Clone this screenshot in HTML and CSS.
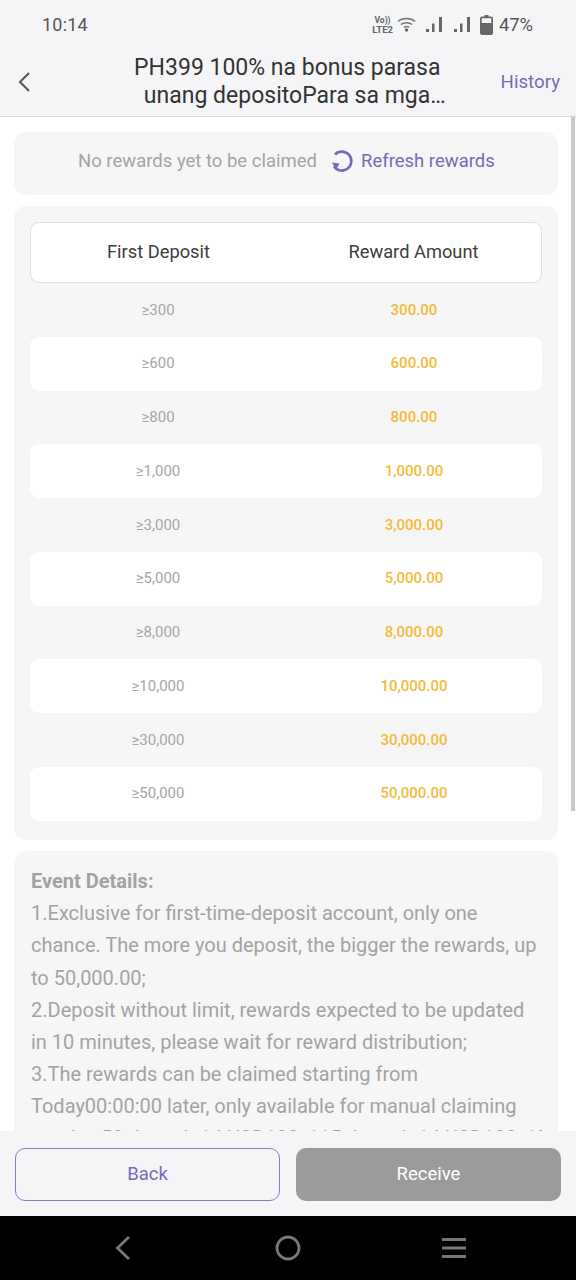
FILE: index.html
```html
<!DOCTYPE html>
<html lang="en">
<head>
<meta charset="utf-8">
<title>Event</title>
<link rel="stylesheet" href="styles.css">
</head>
<body>
<div class="phone">
  <div class="statusbar">
    <span class="clock">10:14</span>
    <div class="status-right">
      <span class="volte"><span class="vo">Vo))</span><span>LTE2</span></span>
      <svg class="wifi" width="19" height="15" viewBox="0 0 19 15"><g fill="none" stroke="#777" stroke-width="1.500"><path d="M1 4.500C5.500.5 13.500.5 18 4.500"/><path d="M3.800 7.500c3.300-2.500 8.100-2.500 11.400 0"/><path d="M6.800 10.300c1.700-1.100 3.700-1.100 5.400 0"/></g><circle cx="9.500" cy="13" r="1.700" fill="#666"/></svg>
      <svg class="sig" width="16" height="15" viewBox="0 0 16 15"><rect x="0" y="12" width="3" height="3" fill="#666"/><rect x="6" y="6.500" width="2.500" height="8.500" fill="#666"/><rect x="13" y="0" width="3" height="15" fill="#666"/></svg>
      <svg class="sig sig2" width="16" height="15" viewBox="0 0 16 15"><rect x="0" y="12" width="3" height="3" fill="#666"/><rect x="6" y="6.500" width="2.500" height="8.500" fill="#666"/><rect x="13" y="0" width="3" height="15" fill="#666"/></svg>
      <svg class="batt" width="13" height="20" viewBox="0 0 13 20"><path d="M4.500 0h4v1.500h2.500A2 2 0 0 1 13 3.500V18a2 2 0 0 1-2 2H2a2 2 0 0 1-2-2V3.500a2 2 0 0 1 2-2h2.500z" fill="#666"/><rect x="1.700" y="3.200" width="9.600" height="4.800" fill="#f5f5f7"/></svg>
      <span class="pct">47%</span>
    </div>
  </div>
  <header class="topbar">
    <svg class="back" width="14" height="22" viewBox="0 0 14 22"><path d="M12 2L3 11l9 9" fill="none" stroke="#555" stroke-width="2"/></svg>
    <h1 class="title">PH399 100% na bonus parasa<br><span class="title2">unang depositoPara sa mga…</span></h1>
    <a class="history">History</a>
  </header>
  <main class="content">
    <section class="card claim">
      <span class="none">No rewards yet to be claimed</span>
      <svg class="refresh" width="24" height="24" viewBox="0 0 24 24"><path d="M5 5.500A9.500 9.500 0 1 1 4 17.500" fill="none" stroke="#7a68ba" stroke-width="2.600"/><path d="M2 13.500l7.500 1-3.500 6.500z" fill="#7a68ba"/></svg>
      <a class="refresh-text">Refresh rewards</a>
    </section>
    <section class="card table">
      <div class="thead"><span>First Deposit</span><span>Reward Amount</span></div>
      <div class="row"><span class="min">≥300</span><span class="amt">300.00</span></div>
      <div class="row alt"><span class="min">≥600</span><span class="amt">600.00</span></div>
      <div class="row"><span class="min">≥800</span><span class="amt">800.00</span></div>
      <div class="row alt"><span class="min">≥1,000</span><span class="amt">1,000.00</span></div>
      <div class="row"><span class="min">≥3,000</span><span class="amt">3,000.00</span></div>
      <div class="row alt"><span class="min">≥5,000</span><span class="amt">5,000.00</span></div>
      <div class="row"><span class="min">≥8,000</span><span class="amt">8,000.00</span></div>
      <div class="row alt"><span class="min">≥10,000</span><span class="amt">10,000.00</span></div>
      <div class="row"><span class="min">≥30,000</span><span class="amt">30,000.00</span></div>
      <div class="row alt"><span class="min">≥50,000</span><span class="amt">50,000.00</span></div>
    </section>
    <section class="card details">
      <p class="details-head">Event Details:</p>
      <p>1.Exclusive for first-time-deposit account, only one chance. The more you deposit, the bigger the rewards, up to 50,000.00;</p>
      <p>2.Deposit without limit, rewards expected to be updated in 10 minutes, please wait for reward distribution;</p>
      <p>3.The rewards can be claimed starting from Today00:00:00 later, only available for manual claiming</p>
      <p class="cutoff">per day 50 deposit 14 USD100, 115 deposit 14 USD100, 155</p>
    </section>
    <div class="scrollbar"></div>
  </main>
  <footer class="actions">
    <button class="btn outline">Back</button>
    <button class="btn solid">Receive</button>
  </footer>
  <nav class="navbar">
    <svg width="18" height="26" viewBox="0 0 18 26"><path d="M15 2L3.500 13 15 24" fill="none" stroke="#777" stroke-width="2.800"/></svg>
    <svg width="26" height="26" viewBox="0 0 26 26"><circle cx="13" cy="13" r="11" fill="none" stroke="#777" stroke-width="2.800"/></svg>
    <svg width="26" height="22" viewBox="0 0 26 22"><path d="M1 2.500h24M1 11h24M1 19.500h24" fill="none" stroke="#777" stroke-width="2.800"/></svg>
  </nav>
</div>
</body>
</html>
```
FILE: styles.css
```css
* { box-sizing: border-box; }
html, body { margin: 0; padding: 0; }
body { font-family: Roboto, "Noto Sans", sans-serif; background: #fff; }
p, h1 { margin: 0; font-weight: 400; }

.phone { width: 576px; height: 1280px; display: flex; flex-direction: column; overflow: hidden; }

.statusbar { height: 49px; flex: none; background: #f5f5f7; display: flex; justify-content: space-between; align-items: center; padding: 0 43px 0 42px; color: #555; }
.clock { font-size: 18px; letter-spacing: 0.2px; }
.status-right { display: flex; align-items: center; }
.volte { display: flex; flex-direction: column; font-size: 9.500px; line-height: 9px; font-weight: 700; color: #666; align-items: center; margin-right: 4px; width: 21px; white-space: nowrap; }
.vo { font-size: 8.500px; }
.wifi { margin-right: 10px; }
.sig2 { margin-left: 12px; }
.batt { margin-left: 10px; }
.pct { font-size: 18.300px; margin-left: 6px; }

.topbar { height: 68px; flex: none; background: #f5f5f7; border-bottom: 1px solid #d9d9d9; display: flex; align-items: center; padding: 0 16px 0 17px; position: relative; }
.back { margin-bottom: 1px; flex: none; }
.title { flex: 1; font-size: 23px; line-height: 27.500px; color: #333; text-align: center; margin: -2px 0 0 0; padding-left: 43px; white-space: nowrap; }
.title2 { padding-left: 15px; }
.history { font-size: 18.700px; color: #7a68ba; margin-bottom: 2px; }

.content { flex: 1; min-height: 0; overflow: hidden; position: relative; padding: 15px 18px 0 14px; display: flex; flex-direction: column; gap: 11px; }
.card { background: #f6f6f7; border-radius: 12px; flex: none; }

.claim { height: 63px; display: flex; align-items: center; padding: 0 0 6px 64px; font-size: 18.500px; }
.none { color: #a3a3a6; }
.refresh { margin-left: 13px; flex: none; }
.refresh-text { color: #7a68ba; margin-left: 7px; }

.table { height: 634px; padding: 16px; }
.thead { height: 61px; background: #fff; border: 1px solid #dedede; border-radius: 9px; display: grid; grid-template-columns: 1fr 1fr; align-items: center; text-align: center; font-size: 18.300px; color: #3d3d3d; padding-bottom: 3px; }
.row { height: 53.750px; display: grid; grid-template-columns: 1fr 1fr; align-items: center; text-align: center; font-size: 15px; border-radius: 9px; padding-bottom: 0.500px; }
.row.alt { background: #fff; }
.min { color: #a6a6a6; }
.amt { color: #f6b93b; font-weight: 500; }

.details { padding: 14px 16px 0 17px; font-size: 20px; line-height: 32.200px; color: #a3a3a3; height: 300px; }
.details-head { font-weight: 700; }
.cutoff { margin-top: -0.500px; white-space: nowrap; overflow: hidden; }

.scrollbar { position: absolute; right: 1px; top: 0; width: 4px; height: 694px; background: #c8c8c8; }

.actions { height: 85px; flex: none; background: #f5f5f7; display: flex; justify-content: space-between; padding: 17px 15px 0; }
.btn { width: 265px; height: 53px; border-radius: 10px; font-family: inherit; font-size: 18.500px; padding: 0 0 1px; }
.outline { background: transparent; border: 1px solid #8a7bc4; color: #7a68ba; }
.solid { background: #9b9b9b; border: 0; color: #fff; }

.navbar { height: 64px; flex: none; background: #000; display: flex; align-items: center; padding: 0 109px 0 114px; justify-content: space-between; }
.navbar svg:nth-child(2) { margin-left: 2px; }
```
